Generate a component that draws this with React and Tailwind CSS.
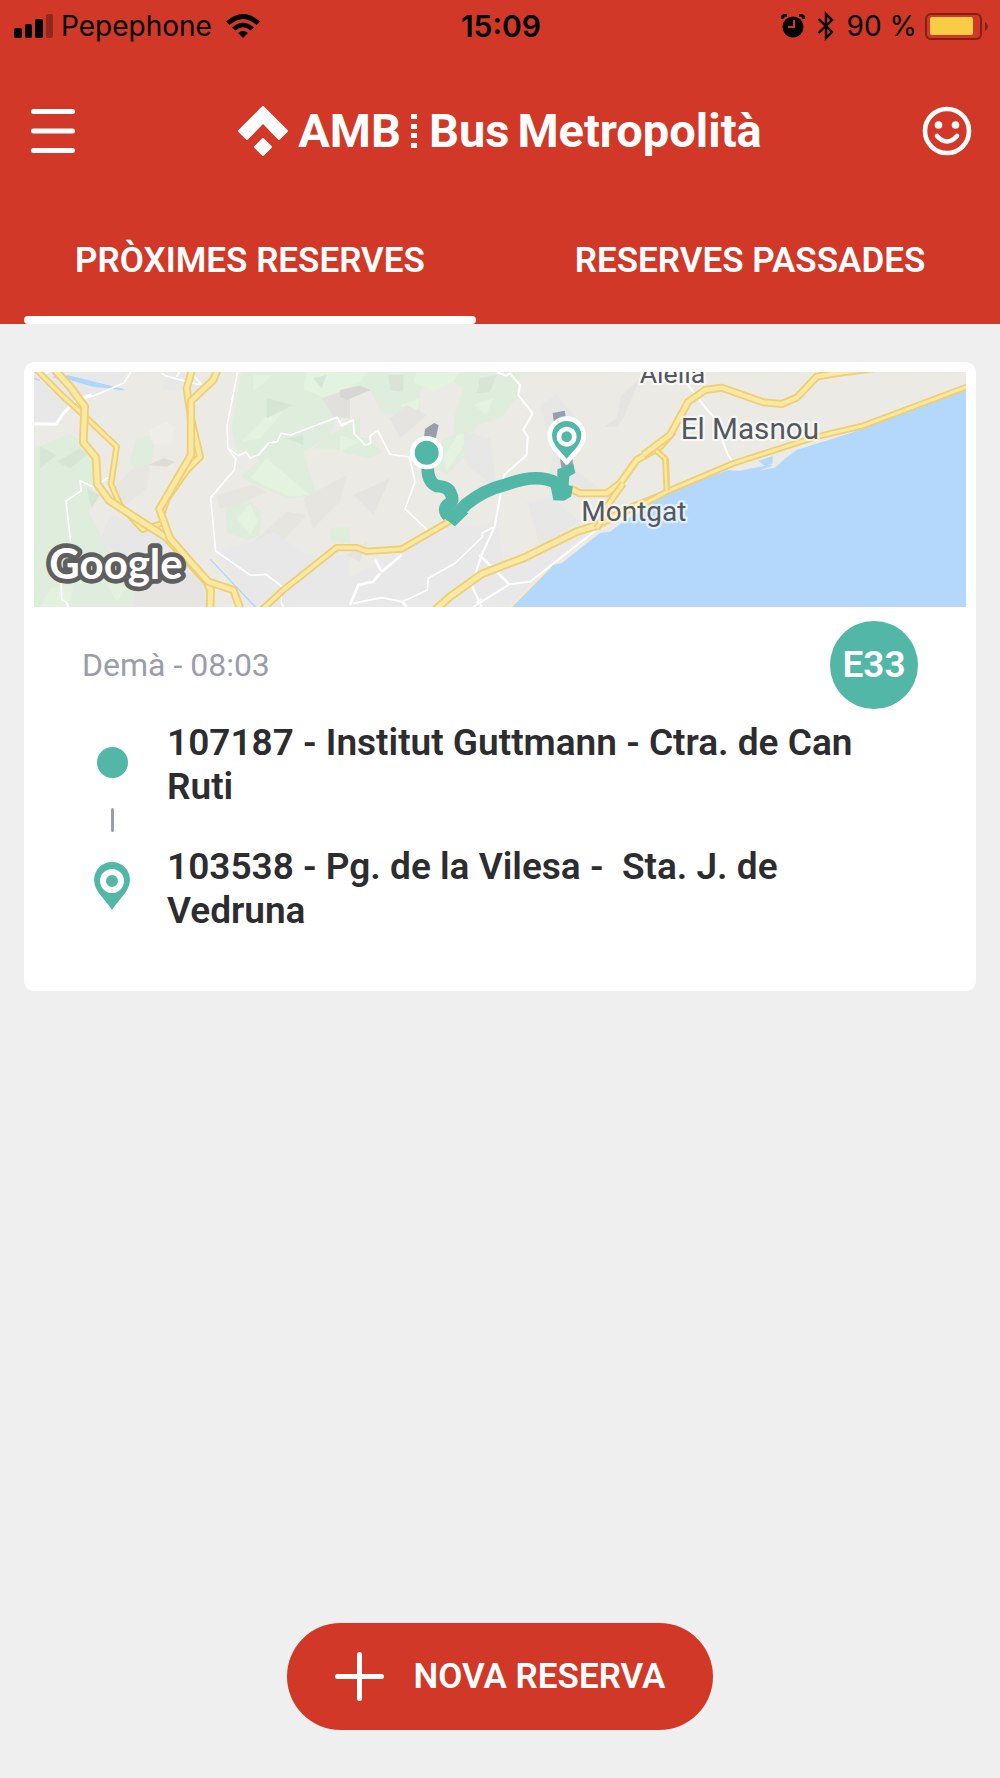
import React from "react";

const TEAL = "#53b7a8";

function Road({ d, w = 22 }) {
  return (
    <g fill="none" strokeLinejoin="round">
      <path d={d} stroke="#efcf73" strokeWidth={w} />
      <path d={d} stroke="#fbe8a2" strokeWidth={w - 11} />
    </g>
  );
}

function Street({ d, w = 5 }) {
  return <path d={d} fill="none" stroke="#fff" strokeWidth={w} strokeLinejoin="round" />;
}

function Label({ x, y, size, children }) {
  return (
    <text
      x={x}
      y={y}
      fontSize={size}
      fill="#53585e"
      stroke="#fff"
      strokeOpacity="0.6"
      strokeWidth="14"
      strokeLinejoin="round"
      paintOrder="stroke"
      className="font-['Roboto',sans-serif]"
    >
      {children}
    </text>
  );
}

function RouteMap() {
  return (
    <svg
      viewBox="0 0 2796 705"
      preserveAspectRatio="xMidYMid slice"
      className="block h-[235px] w-full"
      role="img"
      aria-label="Mapa de la ruta"
    >
      <rect width="2796" height="705" fill="#ebeae5" />

      {/* western valley */}
      <g transform="translate(-42 -51)">
        <path d="M42 51H320L290 90L190 130L110 205H42Z" fill="#e8e8e8" />
        <path d="M425 51H540V110L430 105Z" fill="#e8e8e8" />
        <path d="M42 280L150 238L195 265L222 330L215 440L205 470L270 590L350 690L350 756H42Z" fill="#deeddc" />
        <path d="M112 320L180 280L200 300L150 340Z M60 275L110 300L60 340Z M200 400L240 420L215 460Z" fill="#d6e6d5" />
        <path d="M90 700L160 690L150 756H60Z M230 640L320 700L290 740Z" fill="#e2f2df" />
        <path d="M350 250L405 240L395 320L355 360L330 320Z" fill="#deeddc" />
        <path d="M385 225L440 200L465 215L455 265L400 270Z" fill="#eeede8" />
        <path d="M340 340L390 330L380 400L290 470L280 400Z" fill="#e7e6e1" />
        <path d="M385 330L430 310L465 320L440 335Z" fill="#dddcd8" />
        <path d="M350 680L420 640L560 660L560 756H340Z" fill="#e7e5e2" />
        <path d="M270 480L350 500L450 570L330 620L240 560Z" fill="#e7e7e6" />
        <path d="M665 51H990V190L950 185L930 240L850 290L880 390L905 440L850 425L800 430L720 395L660 365L720 315L650 285L635 220Z" fill="#deeddc" />
        <path d="M860 51L990 51V110L915 130L850 100Z M700 60L760 60L700 110Z M690 370L740 310L870 420L810 425Z M665 260L760 160L790 170L720 250Z" fill="#e3f3df" />
        <path d="M740 130L820 150L740 190Z M800 250L850 240L850 270Z M880 70L920 60L905 100Z" fill="#d6e6d5" />
        <path d="M905 130L990 100V190L940 185Z" fill="#e2e0dc" />
        <path d="M930 240L1020 190V290L880 280Z" fill="#deeddc" />
        <path d="M615 445L690 440L725 470L720 540L680 555L620 530Z M930 520L990 515V565L930 555Z" fill="#deeddc" />
        <path d="M650 490L690 445L715 500L690 540Z" fill="#e3f3df" />
        <path d="M590 420L700 390L740 410L680 440L600 460Z M850 430L980 360L960 440L880 520Z M690 570L800 470L860 480L770 580Z" fill="#e6e5e0" />
        <path d="M590 590L700 560L760 530L860 600L990 600V756H700L650 690Z" fill="#e8e8e8" />
        <path d="M42 70L60 76M100 66L145 63L310 104L220 93L140 70Z" stroke="#aed6fb" strokeWidth="4" fill="#aed6fb" />
        <path d="M571 613L706 756" stroke="#aed6fb" strokeWidth="4" />
        <Street w={9} d="M42 206L108 208L130 175L170 135L215 120" />
        <Street d="M190 130L220 123L312 84L332 51M78 55L90 48M425 55L435 62L500 80L545 90M470 66L478 51M545 90L520 60" />
        <Street d="M264 368L240 384L225 398L180 377L184 407L138 438L152 560M123 680L125 734L138 740L146 756" />
        <Street d="M653 51L621 212L624 280L647 311L643 345L572 428L587 588L692 661L738 658L784 693V745L792 756" />
        <Street d="M624 280L655 302L678 291L690 309L716 299L746 264L772 260L783 235L812 240L952 187L965 213L990 200" />
        <Road w={20} d="M50 45L130 125L180 170L290 275L273 387L300 450L368 524L425 505" />
        <Road w={26} d="M105 45L150 95L194 155L190 262L228 308L232 387L267 436L340 484L440 548L560 680L572 705L570 765" />
        <Road w={24} d="M516 45L500 100L513 190L540 305L500 345L440 430L425 475" />
        <Road w={25} d="M592 45L580 75L513 138L513 300L418 462L450 550L520 630L565 680L640 705L662 765" />
      </g>

      {/* central hills and coast */}
      <g transform="translate(918 -51)">
        <path d="M0 51H540L530 130L480 190L410 210L380 300L320 360L290 330L310 250L340 240L345 180L370 100L310 60L240 100L240 190L120 170L90 100L0 120Z" fill="#deeddc" />
        <path d="M0 51H80L60 80L0 110Z M230 51H360L340 80L280 110L220 80Z M180 150L240 130L230 190Z M350 240L400 230L320 350L310 310Z M400 150L460 130L440 180Z" fill="#e3f3df" />
        <path d="M0 240L80 250L130 290L90 310L0 290Z M0 520L20 540L10 565H0Z" fill="#deeddc" />
        <path d="M0 240L60 260L0 290Z" fill="#e3f3df" />
        <path d="M0 105L60 92L92 105L20 135L0 125Z" fill="#d8d7d3" />
        <path d="M145 60L190 60L190 110L150 105Z M420 70L470 60L450 110L410 115Z" fill="#d9e4d7" />
        <path d="M150 190L200 150L260 180L180 250Z M40 420L150 370L100 480Z M790 215L830 190L845 120L900 70L850 190L830 215Z M20 600L80 560L60 620Z" fill="#e6e4e0" />
        <path d="M600 150L650 120L710 190L700 340L780 400L690 420L620 400L640 300Z M370 230L450 250L470 400L380 330Z M560 440L640 430L720 500L600 570Z" fill="#e7e7e6" />
        <path d="M190 590L330 500L440 520L470 480L490 620L740 530L630 630L510 756H0V680Z" fill="#e8e8e8" />
        <path d="M512 756L636 631L665 625L780 534L810 530L850 500L925 452L995 420V756Z" fill="#b4d8fb" />
        <path d="M512 756L636 631" stroke="#fbeebb" strokeWidth="6" />
        <Street w={6} d="M470 51L498 62L510 55L540 90L535 120L578 175L550 225L563 245L560 300L492 360L464 515L425 600L395 690L425 756" />
        <Street d="M0 210L40 195L42 235L75 270L92 265L90 243L113 227L150 298L208 306L225 380L195 462L262 525" />
        <Street d="M464 515L427 533V546L345 625L265 670L262 705L187 740L125 728L40 745" />
        <Street w={8} d="M418 600L508 688M105 614L125 650L185 600M120 655L100 680L55 690L30 750M187 740L200 756" />
        <Street w={6} d="M765 528L570 680L508 688L425 740L400 756M425 732L410 742" />
        <Road w={22} d="M-235 765L-170 705L-10 578H50L80 589L185 582L330 498" />
        <Road w={26} d="M285 765L330 725L425 657L555 607L710 530L765 513L870 460L985 415" />
        <Road w={24} d="M690 400L720 415H800L840 385L890 315L960 275L1000 230" />
        <Road w={22} d="M800 455L850 385M770 520L810 455" />
        <Road w={18} d="M950 285L978 315L982 405" />
      </g>

      {/* eastern coast and sea */}
      <g transform="translate(1848 -51)">
        <path d="M0 440L60 405L235 345L265 348L330 335L385 325L440 285L600 235L800 160L950 105V760H0Z" fill="#b4d8fb" />
        <path d="M368 303L430 287L375 338L325 347L365 333Z" fill="#ebeae5" />
        <path d="M325 318L368 303V325L345 333Z" fill="#b4d8fb" />
        <Street w={6} d="M108 82L160 150L190 185L234 300L250 322" />
        <Road w={24} d="M-20 300L60 240L115 140L165 105L215 98L340 142L395 147L440 128L500 65L560 54L670 40" />
        <Road w={20} d="M-20 448L50 410L250 325L500 245L640 212L955 94" />
        <Road w={18} d="M20 288L45 310L50 408" />
      </g>

      {/* route and markers */}
      <g transform="translate(918 -51)">
        <path d="M252 245L255 222L282 204L296 210L288 248Z M638 174L674 167L680 200L642 205Z M660 310H698V340L664 338Z" fill="#9a9daa" />
        <g fill="none" stroke={TEAL} strokeWidth="38" strokeLinejoin="round">
          <path d="M263 335Q262 380 290 393Q325 395 332 415Q345 440 322 450Q308 465 325 483" />
          <path d="M330 500L378 448Q430 405 500 388Q570 362 620 373Q655 380 664 400" />
        </g>
        <path d="M303 482L345 514L385 475L350 455Z M630 385L652 380V343L700 326L706 354L688 364L686 390L699 395L693 425L672 437L640 436Z" fill={TEAL} />
        <circle cx="260" cy="293" r="43" fill={TEAL} stroke="#fff" strokeWidth="14" />
        <path
          d="M680 322C660 296 629 274 629 242A51 51 0 0 1 731 242C731 274 700 296 680 322Z"
          fill={TEAL}
          stroke="#fff"
          strokeWidth="14"
          strokeLinejoin="round"
        />
        <circle cx="680" cy="245" r="23" fill={TEAL} stroke="#fff" strokeWidth="14" />
      </g>

      <Label x="1817" y="32" size="80">Alella</Label>
      <Label x="1940" y="200" size="89">El Masnou</Label>
      <Label x="1642" y="448" size="84">Montgat</Label>
      <text
        x="46"
        y="622"
        fontSize="126"
        fontWeight="700"
        fill="#fff"
        stroke="#5f5f5f"
        strokeWidth="28"
        strokeLinejoin="round"
        paintOrder="stroke"
        className="font-['Lato',sans-serif]"
      >
        Google
      </text>
    </svg>
  );
}

function Pin({ className }) {
  return (
    <svg viewBox="0 0 36 48" className={className} aria-hidden="true">
      <path d="M18 48C11 37 0 29 0 18a18 18 0 0 1 36 0C36 29 25 37 18 48Z" fill={TEAL} />
      <circle cx="18" cy="19" r="9" fill={TEAL} stroke="#fff" strokeWidth="6" />
    </svg>
  );
}

function StatusBar() {
  return (
    <div className="grid h-[52px] grid-cols-[1fr_auto_1fr] items-center pr-3 pl-3.5 font-['Inter',sans-serif] text-[28px] leading-8 text-black">
      <div className="flex items-center gap-2">
        <svg viewBox="0 0 39 24" className="h-6 w-[39px]" aria-hidden="true">
          <rect y="14" width="8" height="10" rx="2" />
          <rect x="11" y="10" width="7" height="14" rx="2" />
          <rect x="21" y="5" width="8" height="19" rx="2" />
          <rect x="32" width="7" height="24" rx="2" opacity="0.3" />
        </svg>
        <span>Pepephone</span>
        <svg viewBox="0 0 34 24" className="ml-1.5 h-6 w-[34px]" aria-hidden="true">
          <path d="M0 7.500Q17-7.500 34 7.500L30.500 11Q17-1 3.500 11Z" />
          <path d="M6 13.500Q17 4 28 13.500L24.500 16.500Q17 10 9.500 16.500Z" />
          <path d="M12 19Q17 15 22 19L17 24Z" />
        </svg>
      </div>
      <span className="text-[30px] font-semibold">15:09</span>
      <div className="flex items-center justify-end gap-2">
        <svg viewBox="0 0 24 24" className="mr-1 h-6 w-6" aria-hidden="true">
          <circle cx="12" cy="13" r="10.500" />
          <path d="M1 5Q1 1 6 1M23 5Q23 1 18 1" fill="none" stroke="#000" strokeWidth="3" />
          <path d="M13 6V13H7" fill="none" stroke="#d23827" strokeWidth="2" />
        </svg>
        <svg viewBox="0 0 18 30" className="mr-1 h-[30px] w-[18px]" aria-hidden="true">
          <path d="M1.500 8L15 21L9 27V3L15 9L1.500 22" fill="none" stroke="#000" strokeWidth="2.400" />
        </svg>
        <span>90 %</span>
        <svg viewBox="0 0 63 27" className="h-[27px] w-[63px]" aria-hidden="true">
          <rect x="1" y="1" width="55" height="25" rx="5" fill="none" stroke="#7f2218" strokeWidth="2" />
          <rect x="5" y="4" width="43" height="18" rx="2" fill="#f8cd46" />
          <path d="M60 9Q66 13.500 60 18Z" fill="#7f2218" />
        </svg>
      </div>
    </div>
  );
}

function Header() {
  return (
    <div className="flex h-[157px] items-center justify-between px-7">
      <button type="button" aria-label="Menú" className="px-[3px]">
        <svg viewBox="0 0 44 44" className="h-11 w-11" fill="none" stroke="#fff" strokeWidth="5" strokeLinecap="round">
          <path d="M2.500 2.500H41.500M2.500 22H41.500M2.500 41.500H41.500" />
        </svg>
      </button>
      <h1 className="flex items-center text-[47px] leading-[50px] font-bold text-white">
        <svg viewBox="0 0 50 50" className="mr-2.5 h-[50px] w-[50px]" fill="#fff" stroke="#fff" strokeWidth="2" strokeLinejoin="round" aria-hidden="true">
          <path d="M25 1L49 25L41 33L25 16.500L9 33L1 25Z" />
          <path d="M25 33L33 41L25 49L17 41Z" />
        </svg>
        <span>AMB</span>
        <svg viewBox="0 0 6 34" className="mr-3 ml-2.5 h-[34px] w-1.5" fill="#fff" aria-hidden="true">
          <path d="M0 0H6V5H0ZM0 10H6V15H0ZM0 19H6V24H0ZM0 29H6V34H0Z" />
        </svg>
        <span className="flex gap-2">
          <span>Bus</span>
          <span>Metropolità</span>
        </span>
      </h1>
      <button type="button" aria-label="Perfil">
        <svg viewBox="0 0 50 50" className="h-[50px] w-[50px]" fill="none" stroke="#fff">
          <circle cx="25" cy="25" r="22" strokeWidth="4.600" />
          <path d="M15 30Q25 41 35 30" strokeWidth="4.600" strokeLinecap="round" />
          <circle cx="16.500" cy="19" r="3.800" fill="#fff" stroke="none" />
          <circle cx="33.500" cy="19" r="3.800" fill="#fff" stroke="none" />
        </svg>
      </button>
    </div>
  );
}

function Tabs() {
  return (
    <div role="tablist" className="grid h-[115px] grid-cols-2 text-[35px] leading-11 font-semibold text-white">
      <button type="button" role="tab" aria-selected="true" className="flex flex-col justify-between">
        <span className="w-full pt-[30px] text-center">PRÒXIMES RESERVES</span>
        <span className="mr-6 ml-6 block h-2 self-stretch rounded-sm bg-white" />
      </button>
      <button type="button" role="tab" aria-selected="false" className="flex flex-col">
        <span className="w-full pt-[30px] text-center">RESERVES PASSADES</span>
      </button>
    </div>
  );
}

export default function App() {
  return (
    <div className="flex min-h-screen flex-col bg-[#efefef] font-['Roboto',sans-serif]">
      <header className="bg-[#d23827]">
        <StatusBar />
        <Header />
        <Tabs />
      </header>

      <main className="flex-1 px-6 pt-[38px]">
        <article className="rounded-[10px] bg-white p-2.5">
          <RouteMap />
          <div className="flex items-center justify-between pt-3.5 pr-12 pl-12">
            <p className="text-[32px] leading-10 text-[#9a9daa]">Demà - 08:03</p>
            <span className="flex h-[88px] w-[88px] items-center justify-center rounded-full bg-[#53b7a8] text-[37px] leading-11 font-semibold text-white">
              E33
            </span>
          </div>
          <div className="grid grid-cols-[36px_1fr] gap-x-[37px] pt-3 pr-16 pb-12 pl-[60px] text-[37px] leading-11 font-semibold text-[#2d2d2f]">
            <div className="row-span-2 flex flex-col items-center pt-[26px]">
              <span className="h-[31px] w-[31px] rounded-full bg-[#53b7a8]" />
              <span className="my-[30px] h-6 w-[3px] rounded-full bg-[#9a9daa]" />
              <Pin className="h-12 w-9" />
            </div>
            <p className="mb-9">107187 - Institut Guttmann - Ctra. de Can Ruti</p>
            <p className="whitespace-pre-wrap">{"103538 - Pg. de la Vilesa -  Sta. J. de Vedruna"}</p>
          </div>
        </article>
      </main>

      <footer className="flex justify-center pb-12">
        <button type="button" className="flex h-[107px] items-center gap-[30px] rounded-full bg-[#d23827] px-12 text-[35px] leading-11 font-semibold text-white">
          <svg viewBox="0 0 49 49" className="h-[49px] w-[49px]" fill="none" stroke="#fff" strokeWidth="5" strokeLinecap="round" aria-hidden="true">
            <path d="M24.500 2.500V46.500M2.500 24.500H46.500" />
          </svg>
          NOVA RESERVA
        </button>
      </footer>
    </div>
  );
}
